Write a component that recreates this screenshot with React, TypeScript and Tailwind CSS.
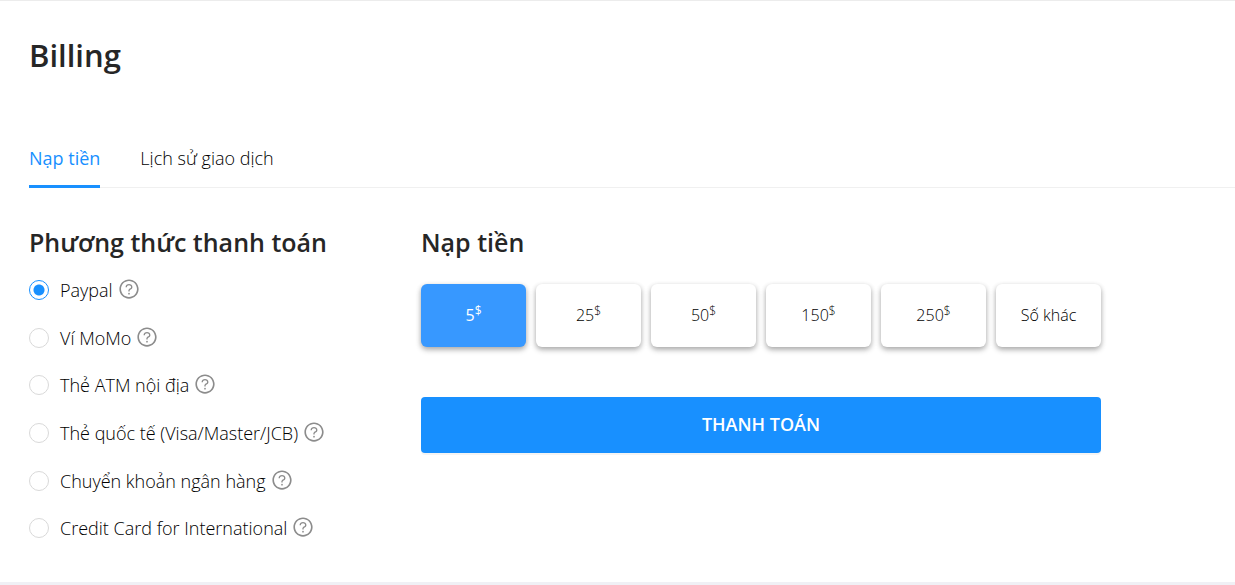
import { useState } from 'react';
import { AiOutlineQuestionCircle } from 'react-icons/ai';

const TABS = ['Nạp tiền', 'Lịch sử giao dịch'];

const METHODS = [
  { id: 'paypal', label: 'Paypal' },
  { id: 'momo', label: 'Ví MoMo' },
  { id: 'atm', label: 'Thẻ ATM nội địa' },
  { id: 'visa', label: 'Thẻ quốc tế (Visa/Master/JCB)' },
  { id: 'bank', label: 'Chuyển khoản ngân hàng' },
  { id: 'credit', label: 'Credit Card for International' },
];

const AMOUNTS = [5, 25, 50, 150, 250];

const AMOUNT_BASE =
  'h-[63px] pb-0.5 rounded-md text-base shadow-[0_3px_6px_rgba(0,0,0,0.16),0_2px_5px_rgba(0,0,0,0.23)] cursor-pointer';

export default function App() {
  const [tab, setTab] = useState(TABS[0]);
  const [method, setMethod] = useState('paypal');
  const [amount, setAmount] = useState<number | 'other'>(5);

  const amountClass = (active: boolean) =>
    `${AMOUNT_BASE} ${active ? 'bg-[#3798ff] text-white font-normal' : 'bg-white'}`;

  return (
    <div className="min-h-screen bg-[#f0f0f5] font-['Open_Sans','Noto_Sans',sans-serif] font-light text-black">
      <main className="bg-white border-t border-[#ececec] pl-[29px] pb-[30px]">
        <h1 className="pt-[31px] text-[31px] leading-[46px] font-semibold text-[#262626]">Billing</h1>

        {/* Tabs */}
        <div role="tablist" className="mt-[51px] flex gap-10 border-b border-[#f0f0f0]">
          {TABS.map(name => (
            <button
              key={name}
              role="tab"
              aria-selected={tab === name}
              onClick={() => setTab(name)}
              className={`h-[59px] pt-0.5 -mb-px border-b-3 text-lg cursor-pointer ${
                tab === name ? 'border-[#1890ff] text-[#1890ff] font-normal' : 'border-transparent'
              }`}
            >
              {name}
            </button>
          ))}
        </div>

        <div className="mt-[34px] flex flex-wrap">
          {/* Payment methods */}
          <section className="w-[392px]">
            <h2 className="text-[25px] leading-10 font-semibold text-[#262626]">Phương thức thanh toán</h2>
            <div className="mt-1 flex flex-col h-[286px]">
              {METHODS.map(m => (
                <div key={m.id} className="flex-1 flex items-center gap-[5px]">
                  <label className="flex items-center gap-[11px] text-lg cursor-pointer">
                    <input
                      type="radio"
                      name="method"
                      checked={method === m.id}
                      onChange={() => setMethod(m.id)}
                      className="appearance-none size-5 rounded-full border border-[#d9d9d9] checked:border-[#1890ff] checked:bg-[radial-gradient(circle,#1890ff_5px,transparent_6px)]"
                    />
                    {m.label}
                  </label>
                  <AiOutlineQuestionCircle size={22} className="mb-0.5 text-[#8c8c8c]" />
                </div>
              ))}
            </div>
          </section>

          {/* Amount */}
          <section className="w-[680px]">
            <h2 className="text-[25px] leading-10 font-semibold text-[#262626]">Nạp tiền</h2>
            <div className="mt-[22px] grid grid-cols-6 gap-2.5">
              {AMOUNTS.map(value => (
                <button key={value} onClick={() => setAmount(value)} className={amountClass(amount === value)}>
                  {value}
                  <sup className="text-xs">$</sup>
                </button>
              ))}
              <button onClick={() => setAmount('other')} className={amountClass(amount === 'other')}>
                Số khác
              </button>
            </div>
            <button className="mt-[50px] w-full h-14 pb-0.5 rounded bg-[#1890ff] text-lg font-semibold text-white shadow-[0_2px_0_rgba(0,0,0,0.045)] cursor-pointer">
              THANH TOÁN
            </button>
          </section>
        </div>
      </main>
    </div>
  );
}
